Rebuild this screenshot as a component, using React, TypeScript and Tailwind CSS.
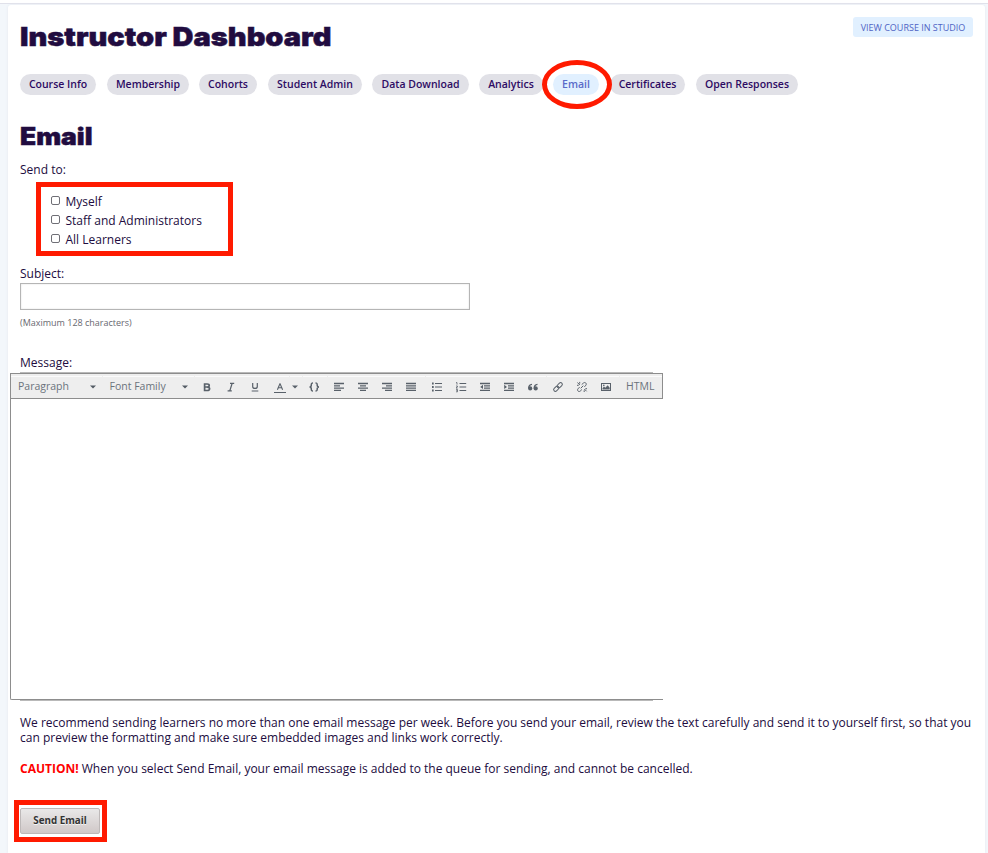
import React from "react";

const TABS = [
  { label: "Course Info", cls: "w-[76px] mr-[11px]" },
  { label: "Membership", cls: "w-[82px] mr-[10px]" },
  { label: "Cohorts", cls: "w-[58px] mr-[11px]" },
  { label: "Student Admin", cls: "w-[94px] mr-[10px]" },
  { label: "Data Download", cls: "w-[97px] mr-[10px]" },
  { label: "Analytics", cls: "w-[64px] mr-[10px]" },
  { label: "Email", cls: "w-[46px] mr-[11px]", active: true },
  { label: "Certificates", cls: "w-[75px] mr-[11px]" },
  { label: "Open Responses", cls: "w-[102px]" },
];

// Widths of the highlight strips above each toolbar group
const GROUPS = ["w-[91px]", "w-[91px]", "w-[94px]", "w-[12px]", "w-[24px]", "w-[97px]", "w-[120px]", "w-[72px]", "w-[42px]"];

function Cell({ cls = "w-6", children }: { cls?: string; children: React.ReactNode }) {
  return <span className={"flex h-full shrink-0 items-center justify-center " + cls}>{children}</span>;
}

function Icon({ children }: { children: React.ReactNode }) {
  return (
    <svg width="12" height="12" viewBox="0 0 12 12" fill="none" stroke="currentColor" strokeWidth="1.3">
      {children}
    </svg>
  );
}

function Caret() {
  return (
    <svg width="6" height="4" viewBox="0 0 6 4" fill="currentColor">
      <path d="M0 .5h6L3 3.5z" />
    </svg>
  );
}

function Quote() {
  return (
    <Icon>
      <g fill="currentColor" stroke="none">
        <circle cx="3.2" cy="7.4" r="2.1" />
        <circle cx="8.7" cy="7.4" r="2.1" />
      </g>
      <path d="M1.7 7.3C1.7 5 2.8 3.5 5 3.3M7.2 7.3C7.2 5 8.3 3.5 10.5 3.3" />
    </Icon>
  );
}

function Toolbar() {
  return (
    <div className="flex h-[26px] flex-col border border-[#8d8d8d] bg-[#eeeeee] pt-[2px] text-[10.5px] text-[#6b737c]">
      <div className="flex h-px shrink-0 gap-px">
        {GROUPS.map((w, i) => (
          <span key={i} className={"h-px bg-[#fbfbfb] " + w} />
        ))}
      </div>
      <div className="flex min-h-0 flex-1 items-center pb-[2px]">
        <span className="w-[77px] shrink-0 pl-[7px]">Paragraph</span>
        <Cell cls="w-[10px] text-[#535b64]"><Caret /></Cell>
        <span className="w-[82px] shrink-0 whitespace-nowrap pl-[11.5px]">Font Family</span>
        <Cell cls="w-[10px] text-[#535b64]"><Caret /></Cell>
        <div className="flex h-full items-center pl-[5px] text-[#59616a]">
          <Cell>
            <Icon>
              <path strokeWidth="1.7" d="M3.6 2.3v7.9M3 3h3.2c2.7 0 2.7 3 0 3H3.6M6.2 6.1c3.2 0 3.2 3.4 0 3.4H3" />
            </Icon>
          </Cell>
          <Cell>
            <Icon><path strokeWidth="1.2" d="M5 2.3h4.2M2.6 9.8h4.2M7.2 2.3 4.8 9.8" /></Icon>
          </Cell>
          <Cell>
            <Icon><path strokeWidth="1.2" d="M3.7 2v3.4c0 2.7 4.6 2.7 4.6 0V2M2.7 10h6.6" /></Icon>
          </Cell>
          <Cell cls="w-[23px] pl-[3px]">
            <Icon><path strokeWidth="1.1" d="M3.4 8.7 5.9 2.8h.2l2.5 5.9M4.3 6.8h3.4" /><path strokeWidth="1" d="M0 11.5h12" /></Icon>
          </Cell>
          <Cell cls="w-[10px]"><Caret /></Cell>
          <Cell cls="w-6 ml-[2px]">
            <Icon>
              <path strokeWidth="1.5" d="M5 2C3.4 2 3.3 2.4 3.3 4c0 1.5-.5 2-1.8 2 1.3 0 1.8.5 1.8 2 0 1.6.1 2 1.7 2M7.5 2c1.6 0 1.7.4 1.7 2 0 1.5.5 2 1.8 2-1.3 0-1.8.5-1.8 2 0 1.6-.1 2-1.7 2" />
            </Icon>
          </Cell>
          <Cell cls="w-6 ml-px"><Icon><path d="M1 2.5h10M1 4.8h6M1 7.1h10M1 9.4h7" /></Icon></Cell>
          <Cell><Icon><path d="M1 2.5h10M3 4.8h6M1 7.1h10M3 9.4h6" /></Icon></Cell>
          <Cell><Icon><path d="M1 2.5h10M5 4.8h6M1 7.1h10M4 9.4h7" /></Icon></Cell>
          <Cell><Icon><path d="M1 2.5h10M1 4.8h10M1 7.1h10M1 9.4h10" /></Icon></Cell>
          <Cell cls="w-6 ml-[2px]">
            <Icon><path strokeWidth="1.1" d="M4 2.5h7M4 6h7M4 9.5h7" /><path strokeWidth="1.8" d="M1 2.5h1.7M1 6h1.7M1 9.5h1.7" /></Icon>
          </Cell>
          <Cell>
            <Icon><path strokeWidth="1.1" d="M4.5 2.5h6.7M4.5 6h6.7M4.5 9.5h6.7" /><path strokeWidth=".8" d="M1 1.6h1v2M1 5h1.4v1L1 7h1.6M1 8.4h1.5v2.4H1M1.3 9.6h1" /></Icon>
          </Cell>
          <Cell><Icon><path d="M1 2.5h10M5 4.8h6M5 7.1h6M1 9.4h10" /><path fill="currentColor" stroke="none" d="M4 3.8v4.3L1.2 6z" /></Icon></Cell>
          <Cell><Icon><path d="M1 2.5h10M5 4.8h6M5 7.1h6M1 9.4h10" /><path fill="currentColor" stroke="none" d="M1.2 3.8v4.3L4 6z" /></Icon></Cell>
          <Cell><Quote /></Cell>
          <Cell cls="w-6 ml-px">
            <Icon>
              <g transform="rotate(-45 6 6)" strokeWidth="1">
                <rect x=".6" y="4.3" width="6" height="3.4" rx="1.7" />
                <rect x="5.4" y="4.3" width="6" height="3.4" rx="1.7" />
              </g>
            </Icon>
          </Cell>
          <Cell>
            <Icon>
              <path strokeWidth="1" d="M5.7 3.6 7.5 2c1.6-1.4 3.6.6 2.4 2.2L8.4 5.9M3.6 6.1 2 7.8c-1.3 1.6.6 3.6 2.2 2.3l1.7-1.6M1.4 1.6l2.5 2.3M8.3 8l2.3 2.3M3.7.9v1.7M1 4.3h1.7M8.2 9.3V11M9.4 7.7H11M4.7 7.3l2.6-2.6" />
            </Icon>
          </Cell>
          <Cell>
            <Icon>
              <rect x="1.5" y="2.5" width="9" height="7" strokeWidth="1" />
              <path fill="currentColor" stroke="none" d="M2.5 8.6V7.2l1.5-1.6 1.3 1.1L7.7 4.2 9.7 6.7v1.9z" />
              <circle cx="3.8" cy="4.4" r=".8" fill="currentColor" stroke="none" />
            </Icon>
          </Cell>
        </div>
        <span className="pl-2 text-[10.5px]">HTML</span>
      </div>
    </div>
  );
}

function Option({ label }: { label: string }) {
  return (
    <label className="flex h-[19px] items-center text-[12px]">
      <span className="mr-[5.5px] mb-[2px] h-[9px] w-[9px] rounded-[2px] border border-[#6f6f76] bg-white" />
      {label}
    </label>
  );
}

export default function App() {
  return (
    <div className="flex h-[853px] w-[988px] flex-col overflow-hidden bg-[#f3f7fb] font-['Open_Sans',sans-serif] text-[12px] leading-[15px] text-[#210c40]">
      <div className="h-1 shrink-0 border-b border-[#e0e1ea] bg-white" />
      <main className="mr-[3px] ml-2 mt-px flex-1 rounded-t-[3px] bg-white pl-3 shadow-[0_0_3px_#e4e6ef]">
        <header className="flex h-[69px] justify-between pr-3">
          <h1 className="origin-left scale-x-[1.115] whitespace-nowrap pt-[13px] font-['Inter',sans-serif] text-[26px] leading-[37px] font-black [-webkit-text-stroke:0.5px_#210c40]">
            Instructor Dashboard
          </h1>
          <a className="mt-3 flex h-5 w-[120px] items-center justify-center rounded-[3px] bg-[#e1f0ff] text-[9px] whitespace-nowrap text-[#4f63c4]">
            VIEW COURSE IN STUDIO
          </a>
        </header>

        <nav className="flex h-[21px]">
          {TABS.map((t) => (
            <span
              key={t.label}
              className={
                "relative flex h-[21px] shrink-0 items-center justify-center rounded-full text-[10.5px] font-semibold whitespace-nowrap " +
                (t.active ? "bg-[#e1f0ff] text-[#5a6bc9] " : "bg-[#e1e1e7] text-[#2d0b63] ") +
                t.cls
              }
            >
              {t.label}
              {t.active && (
                <span className="absolute -top-[14px] -left-[11px] z-10 h-[49px] w-[70px] rounded-[50%] border-[5px] border-[#ff1a00]" />
              )}
            </span>
          ))}
        </nav>

        <h2 className="mt-[23px] h-[36px] w-fit origin-left scale-x-[1.1] font-['Inter',sans-serif] text-[24px] leading-[37px] font-black [-webkit-text-stroke:0.5px_#210c40]">
          Email
        </h2>
        <p className="mt-2">Send to:</p>
        <div className="mt-[5px] ml-4 h-[74px] w-[197px] border-[5px] border-[#ff1a00] pt-[5px] pl-[10px]">
          <Option label="Myself" />
          <Option label="Staff and Administrators" />
          <Option label="All Learners" />
        </div>

        <p className="mt-[10px]">Subject:</p>
        <div className="mt-[2px] h-[27px] w-[450px] border border-[#b5b5b5] bg-white shadow-[inset_0_0_2px_#dddddd]" />
        <p className="mt-[6px] text-[9px] leading-[14px] text-[#686870]">(Maximum 128 characters)</p>

        <p className="mt-[25px]">Message:</p>
        <div className="mt-[2px] h-px w-[633px] bg-[#b9b9b9]" />
        <div className="-ml-[10px] w-[653px]">
          <Toolbar />
          <div className="h-[301px] rounded-bl-[2px] border-b border-l border-[#8d8d8d] bg-white" />
        </div>
        <div className="h-px w-[633px] bg-[#b9b9b9]" />

        <p className="mt-[14px] whitespace-nowrap">
          We recommend sending learners no more than one email message per week. Before you send your email, review the text carefully and send it to yourself first, so that you
          <br />
          can preview the formatting and make sure embedded images and links work correctly.
        </p>
        <p className="mt-4">
          <b className="text-[#ff0000]">CAUTION!</b> When you select Send Email, your email message is added to the queue for sending, and cannot be cancelled.
        </p>

        <div className="mt-6 -ml-[6px] flex h-[42px] w-[93px] border-[5px] border-[#ff1a00] pt-[3px] pl-px">
          <button className="h-[26px] w-20 rounded-[2px] border border-[#bdb8b8] bg-gradient-to-b from-[#e9e8e8] to-[#d0c8c8] pb-px text-[9.8px] font-bold whitespace-nowrap text-[#333333] [text-shadow:0_1px_0_#f5f5f5]">
            Send Email
          </button>
        </div>
      </main>
    </div>
  );
}
